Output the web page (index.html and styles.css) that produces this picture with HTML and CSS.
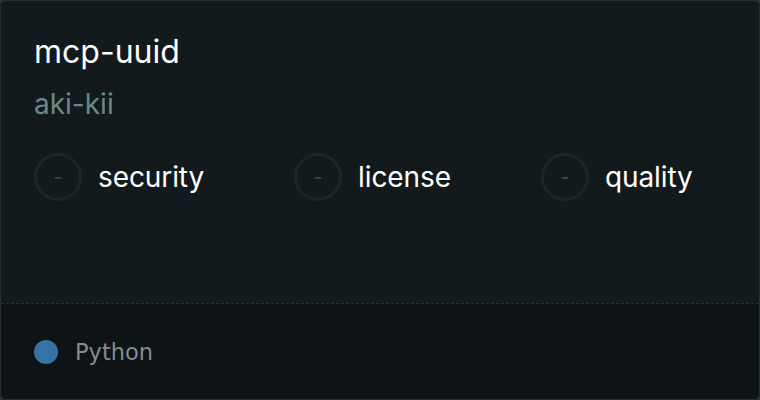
FILE: index.html
```html
<!DOCTYPE html>
<html lang="en">
<head>
    <meta charset="UTF-8">
    <title>mcp-uuid</title>
    <link rel="stylesheet" href="styles.css">
</head>
<body>
    <div class="card">
        <div class="card-body">
            <h1 class="repo-name">mcp-uuid</h1>
            <div class="repo-owner">aki-kii</div>

            <div class="scores">
                <div class="score">
                    <span class="score-ring">-</span>
                    <span class="score-label">security</span>
                </div>
                <div class="score">
                    <span class="score-ring">-</span>
                    <span class="score-label">license</span>
                </div>
                <div class="score">
                    <span class="score-ring">-</span>
                    <span class="score-label">quality</span>
                </div>
            </div>
        </div>

        <div class="card-footer">
            <span class="lang-dot"></span>
            <span class="lang-name">Python</span>
        </div>
    </div>
</body>
</html>
```

FILE: styles.css
```css
/* Página */
body {
    margin: 0;
    background-color: #2b3133;
    font-family: Inter, "Noto Sans", sans-serif;
}

/* Cartão */
.card {
    width: 760px;
    height: 400px;
    box-sizing: border-box;
    border: 1px solid #262d30;
    border-radius: 6px;
    background-color: #121a1d;
    display: flex;
    flex-direction: column;
    overflow: hidden;
}

.card-body {
    flex: 1;
    padding: 31px 33px 0 33px;
}

/* Título e dono */
.repo-name {
    margin: 0;
    font-size: 32px;
    font-weight: 400;
    line-height: 40px;
    color: #ffffff;
}

.repo-owner {
    margin-top: 14px;
    font-size: 28px;
    line-height: 36px;
    color: #6e8882;
}

/* Notas */
.scores {
    display: flex;
    gap: 90px;
    margin-top: 31px;
}

.score {
    display: flex;
    align-items: center;
    gap: 16px;
}

.score-ring {
    width: 48px;
    height: 48px;
    box-sizing: border-box;
    border: 3px solid #1d2528;
    border-radius: 50%;
    display: flex;
    align-items: center;
    justify-content: center;
    color: #41474a;
    font-size: 20px;
}

.score-label {
    font-size: 28px;
    letter-spacing: -0.1px;
    color: #ffffff;
}

/* Rodapé */
.card-footer {
    height: 96px;
    box-sizing: border-box;
    border-top: 1px dashed #2a3235;
    background-color: #0e1316;
    display: flex;
    align-items: center;
    gap: 17px;
    padding: 0 33px;
}

.lang-dot {
    width: 24px;
    height: 24px;
    border-radius: 50%;
    background-color: #3572a5;
}

.lang-name {
    font-family: "DejaVu Sans", sans-serif;
    font-size: 22.5px;
    color: #858b8d;
}
```
